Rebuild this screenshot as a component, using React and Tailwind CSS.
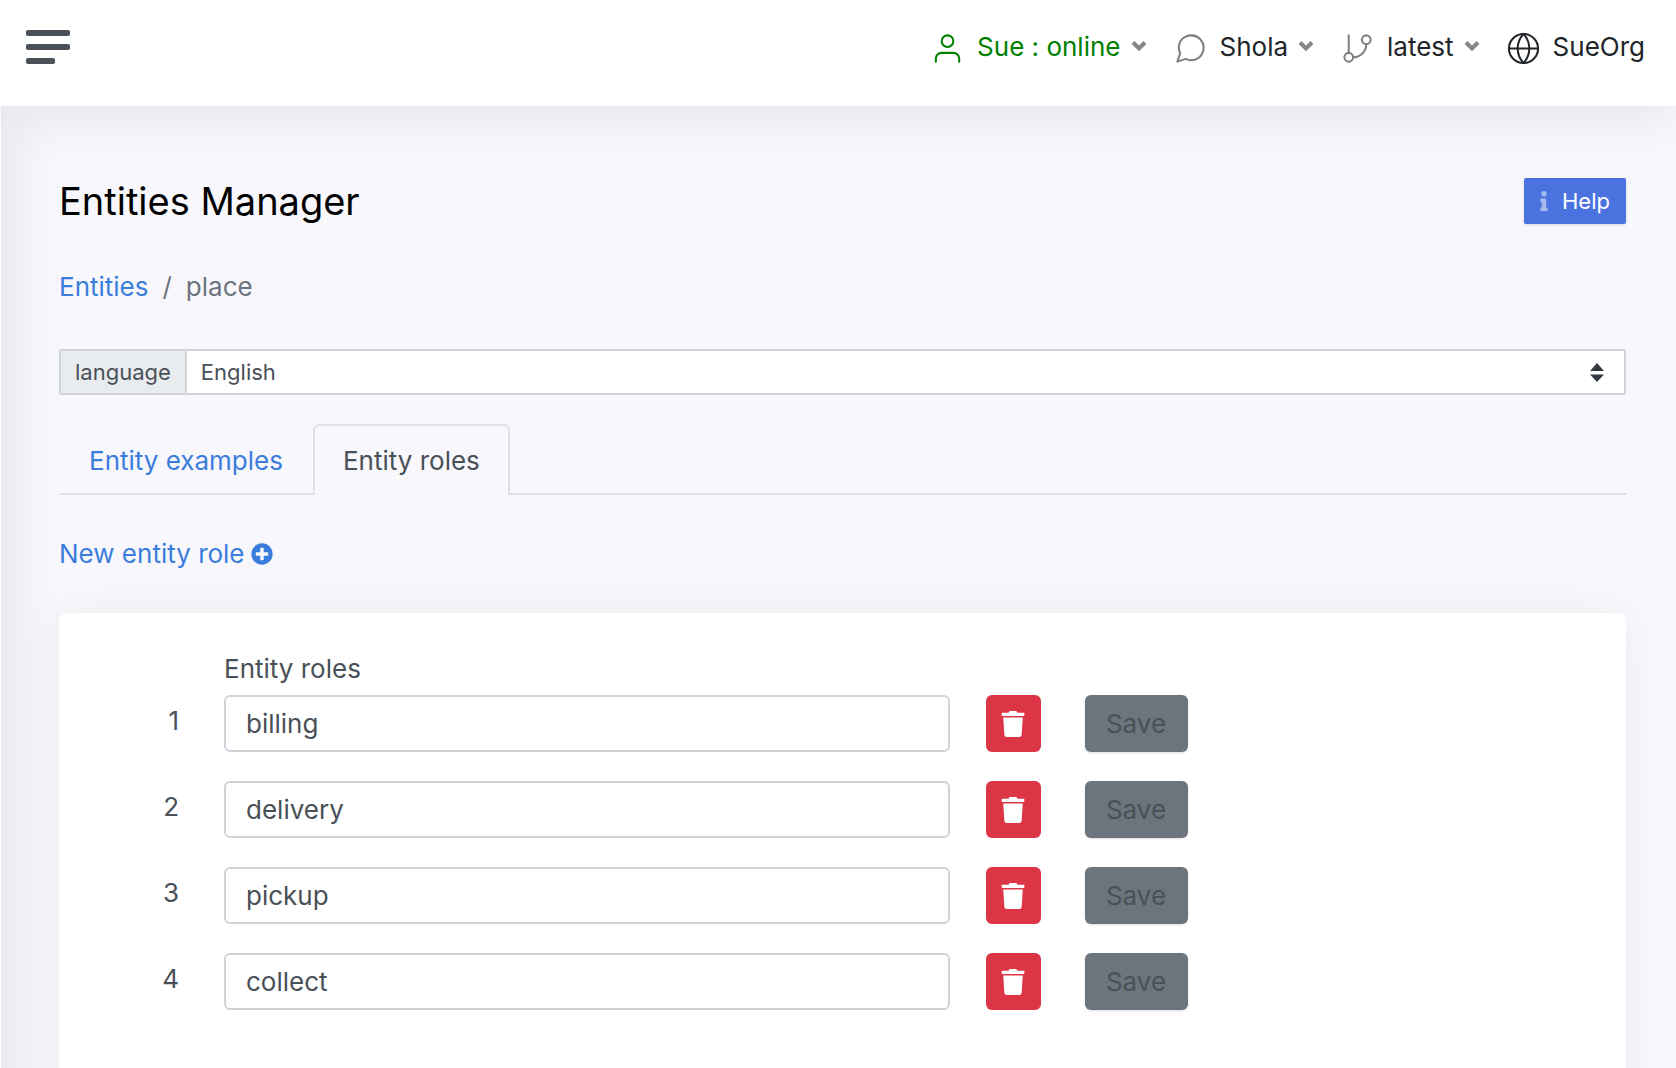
import React, { useState } from "react";
import { FiUser, FiMessageCircle, FiGitBranch, FiGlobe } from "react-icons/fi";
import { FaInfo, FaPlusCircle, FaTrash } from "react-icons/fa";

const roles = ["billing", "delivery", "pickup", "collect"];

function Chevron() {
  return (
    <svg viewBox="0 0 16 12" className="mb-0.5 ml-2.5 h-3 w-4 text-[#868686]" fill="none" stroke="currentColor" strokeWidth="4" aria-hidden="true">
      <path d="M2 2.5 8 8.5 14 2.5" />
    </svg>
  );
}

function NavItem({ icon: Icon, label, iconClass, textClass, chevron }) {
  return (
    <button type="button" className="flex items-center">
      <Icon size={35} strokeWidth={1.4} className={iconClass} aria-hidden="true" />
      <span className={textClass}>{label}</span>
      {chevron && <Chevron />}
    </button>
  );
}

function Header() {
  return (
    <header className="relative z-10 flex h-[106px] items-start justify-between bg-white pt-[27px] pr-[31px] pl-[26px] shadow-[0_0_60px_rgba(33,37,41,0.12)]">
      <button type="button" aria-label="Toggle sidebar" className="mt-[3px] flex flex-col gap-2">
        <span className="h-1.5 w-11 rounded-xs bg-[#495057]" />
        <span className="h-1.5 w-11 rounded-xs bg-[#495057]" />
        <span className="h-1.5 w-[29px] rounded-xs bg-[#495057]" />
      </button>
      <nav className="flex items-center gap-[26px] leading-10">
        <NavItem icon={FiUser} label="Sue : online" iconClass="mt-0.5 text-[#008000]" textClass="ml-3 text-[#008000]" chevron />
        <NavItem icon={FiMessageCircle} label="Shola" iconClass="mt-0.5 text-[#808080]" textClass="ml-3 text-[#212529]" chevron />
        <NavItem icon={FiGitBranch} label="latest" iconClass="mt-0.5 text-[#808080]" textClass="ml-3 text-[#212529]" chevron />
        <NavItem icon={FiGlobe} label="SueOrg" iconClass="mt-0.5 text-[#212529]" textClass="ml-3 text-[#212529]" />
      </nav>
    </header>
  );
}

function LanguagePicker() {
  return (
    <div className="mt-[42px] flex h-[46px] rounded-xs border-2 border-[#ced4da] bg-white text-[22px]">
      <label htmlFor="language" className="flex items-center border-r-2 border-[#ced4da] bg-[#e9ecef] px-3.5">
        language
      </label>
      <div className="relative flex flex-1">
        <select id="language" defaultValue="English" className="w-full appearance-none bg-transparent pl-3.5">
          <option>English</option>
        </select>
        <svg viewBox="0 0 14 20" className="pointer-events-none absolute top-3 right-5 h-5 w-3.5 fill-[#343a40]" aria-hidden="true">
          <path d="M7 0 14 8H0ZM0 11.5H14L7 19Z" />
        </svg>
      </div>
    </div>
  );
}

function RoleRow({ index, name }) {
  const [value, setValue] = useState(name);
  return (
    <li className="flex h-[57px] items-center">
      <span className="mb-1.5 w-[120px] shrink-0 text-right">{index}</span>
      <input
        aria-label={`Entity role ${index}`}
        value={value}
        onChange={(e) => setValue(e.target.value)}
        className="ml-[45px] h-full w-[46.3%] rounded-md border-2 border-[#ced4da] bg-white px-5"
      />
      <button type="button" aria-label={`Delete ${name}`} className="ml-9 flex h-full w-[55px] items-center justify-center rounded-md bg-[#dc3545] text-white">
        <FaTrash size={26} aria-hidden="true" />
      </button>
      <button type="button" disabled className="ml-11 h-full w-[103px] rounded-md bg-[#6c757d] text-[#495057] shadow-sm">
        Save
      </button>
    </li>
  );
}

export default function App() {
  return (
    <div className="flex h-screen flex-col overflow-hidden bg-[#f7f7fc] font-['Inter',sans-serif] text-[26px] leading-10 text-[#495057]">
      <Header />
      <div className="-mb-16 flex min-h-0 flex-1">
        <div className="-ml-[255px] w-64 shrink-0 bg-white shadow-[0_0_60px_rgba(33,37,41,0.12)]" />
        <main className="flex min-w-0 flex-1 flex-col pt-[71px] pr-[50px] pl-[58px]">
          <div className="flex items-center justify-between">
            <h1 className="text-[38px] leading-12 text-black">Entities Manager</h1>
            <button type="button" className="flex h-[46px] items-center gap-2 rounded-xs bg-[#4b73df] pr-4 pl-2.5 text-[22px] text-white shadow-sm">
              <FaInfo size={20} className="opacity-50" aria-hidden="true" />
              Help
            </button>
          </div>
          <nav aria-label="Breadcrumb" className="mt-[42px] flex gap-3.5 text-[#6c757d]">
            <a href="#entities" className="text-[#3b7ddd]">Entities</a>
            <span>/</span>
            <span>place</span>
          </nav>
          <LanguagePicker />
          <div role="tablist" className="mt-[29px] flex h-[71px] border-b-2 border-[#dee2e6]">
            <button type="button" role="tab" aria-selected="false" className="-mb-0.5 border-t-2 border-transparent px-[30px] text-[#3b7ddd]">
              Entity examples
            </button>
            <button type="button" role="tab" aria-selected="true" className="-mb-0.5 rounded-t-md border-2 border-b-0 border-[#dee2e6] bg-[#f7f7fc] px-7">
              Entity roles
            </button>
          </div>
          <a href="#new-role" className="mt-[39px] flex items-center gap-1.5 self-start text-[#3b7ddd]">
            New entity role
            <FaPlusCircle size={22} aria-hidden="true" />
          </a>
          <section className="mt-[39px] min-h-0 flex-1 rounded-t-lg bg-white pt-9 shadow-[0_0_48px_rgba(33,37,41,0.05)]">
            <h2 className="ml-[165px]">Entity roles</h2>
            <ul className="mt-1.5 flex flex-col gap-[29px]">
              {roles.map((name, i) => (
                <RoleRow key={name} index={i + 1} name={name} />
              ))}
            </ul>
          </section>
        </main>
      </div>
    </div>
  );
}
